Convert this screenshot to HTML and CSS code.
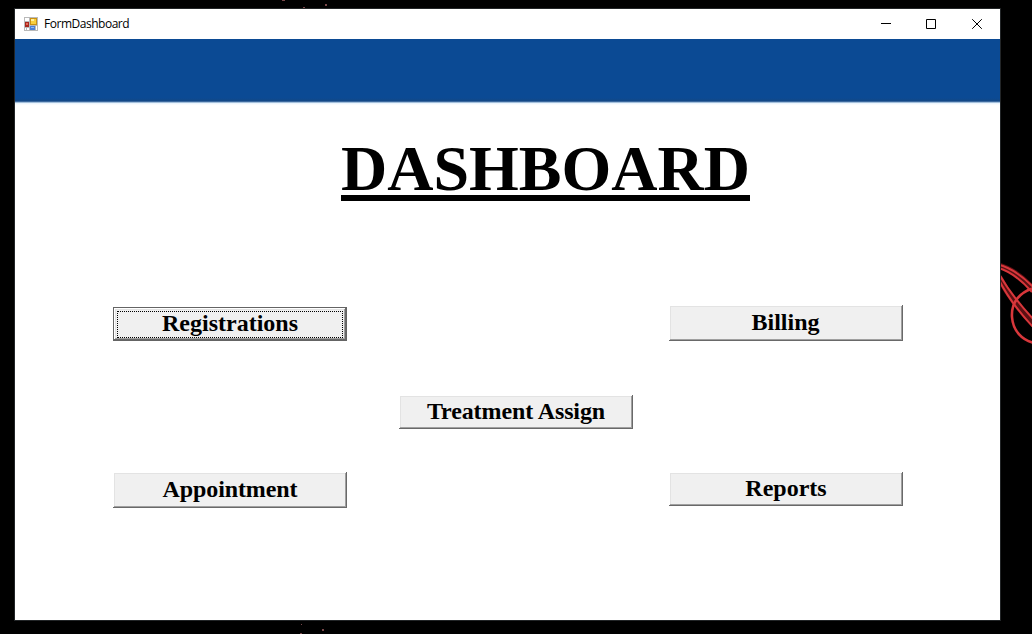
FILE: index.html
```html
<!DOCTYPE html>
<html lang="en">
<head>
<meta charset="utf-8">
<title>FormDashboard</title>
<link rel="stylesheet" href="styles.css">
</head>
<body>
<div class="desktop">
  <svg class="wallpaper" width="1032" height="634" viewBox="0 0 1032 634" aria-hidden="true">
    <g fill="none" stroke="#5a1013" stroke-width="6"><path d="M998 265.500Q1016 270 1034 290"/><path d="M999 277C1009 296 1018 308 1034 325"/></g>
    <g fill="none" stroke="#d8373b" stroke-width="2">
      <path d="M998 264.500Q1016 269 1034 288"/>
      <path d="M998 268Q1014 272 1032 292"/>
      <path d="M999 274C1010 293 1020 305 1034 320"/>
      <path d="M999 280C1008 298 1018 311 1034 328"/>
      <path stroke-width="2.600" d="M1034 288C1020 292 1011 302 1012 317C1013 331 1022 340 1034 343"/>
    </g>
    <g fill="#79484a">
      <path d="M282 0h3v1h-3zM303 7h2v1h-2zM325 4h2v2h-2zM301 624h1v1h-1zM322 629h2v2h-2zM300 633h2v1h-2z"/>
    </g>
  </svg>
  <main class="window">
    <header class="titlebar">
      <svg class="app-icon" width="14" height="14" viewBox="0 0 14 14" aria-hidden="true">
        <path fill="#b9b9b9" d="M0 0h14v14H0z"/>
        <path fill="#fff" d="M1 1h4v3H1zM1 11h1v2H1zM3 11h2v2H3zM12 9h1v4h-1z"/>
        <path fill="#a8261d" d="M1 5h4v5H1z"/><path fill="#e56a55" d="M2 6h2v2H2z"/>
        <path fill="#c99114" d="M6 1h7v7H6z"/><path fill="#f8cf3e" d="M7 2h5v5H7z"/><path fill="#fff0a0" d="M7 2h3v2H7z"/>
        <path fill="#4b80d6" d="M6 9h5v4H6z"/><path fill="#8fb8f5" d="M7 10h3v1H7z"/>
      </svg>
      <span class="caption">FormDashboard</span>
      <svg class="controls" width="102" height="10" viewBox="0 0 102 10" aria-hidden="true">
        <path fill="#000" d="M0 4h10v1H0z"/>
        <path fill="none" stroke="#000" d="M45.500.5h9v9h-9zM91.200.2l9.600 9.600M100.800.2l-9.600 9.600"/>
      </svg>
    </header>
    <div class="banner"></div>
    <h1 class="heading">DASHBOARD</h1>
    <nav class="menu">
      <button class="button registrations focused">Registrations</button>
      <button class="button billing">Billing</button>
      <button class="button treatment">Treatment Assign</button>
      <button class="button appointment">Appointment</button>
      <button class="button reports">Reports</button>
    </nav>
  </main>
</div>
</body>
</html>
```
FILE: styles.css
```css
* { box-sizing: border-box; }
body { margin: 0; background: #000; overflow: hidden; }
.desktop { position: relative; width: 1032px; height: 634px; padding: 9px 0 0 15px; background: #000; }
.wallpaper { position: absolute; left: 0; top: 0; }
.window { position: relative; width: 985px; height: 611px; background: #fff; box-shadow: 0 0 0 1px #222527; }
.titlebar { display: flex; align-items: center; height: 30px; padding: 0 17px 0 9px; }
.app-icon { margin-top: -1px; }
.caption { margin-left: 6px; font: 12px/16px "Open Sans", sans-serif; color: #000; letter-spacing: -0.48px; }
.controls { margin: -1px 0 0 auto; }
.banner {
  height: 66px;
  background: linear-gradient(#0b4a94 0 59px, #124887 61.5px, #3c699e 62.5px, #a4c0dc 63.5px, #edf6fe 64.5px, #fff 66px);
}
.heading {
  width: 409px; height: 66px; margin: 30px 0 0 326px;
  border-bottom: 6px solid #000;
  font: bold 64px/68px "Liberation Serif", serif; color: #000;
}
.menu {
  display: grid;
  grid-template-columns: 234px 52px 234px 36px 234px;
  grid-template-rows: 36px 54px 34px 43px 36px;
  margin: 104px 0 0 98px;
}
.button {
  width: 234px; height: 34px; padding: 0 0 2px; border: 0; border-radius: 0; outline: 0;
  background: #f0f0f0; color: #000;
  font: bold 24px/28px "Liberation Serif", serif;
  box-shadow: inset -1px -1px #696969, inset 1px 1px #fff, inset -2px -2px #a0a0a0, inset 2px 2px #e3e3e3;
}
.focused {
  position: relative;
  border: 1px solid #646464;
}
.focused::after { content: ""; position: absolute; inset: 3px 3px 2px; border: 1px dotted #000; }
.registrations { grid-area: 1 / 1; align-self: end; }
.billing { grid-area: 1 / 5; height: 36px; padding-right: 1px; }
.treatment { grid-area: 3 / 3; letter-spacing: -0.1px; }
.appointment { grid-area: 5 / 1; height: 36px; letter-spacing: -0.1px; }
.reports { grid-area: 5 / 5; }
```
